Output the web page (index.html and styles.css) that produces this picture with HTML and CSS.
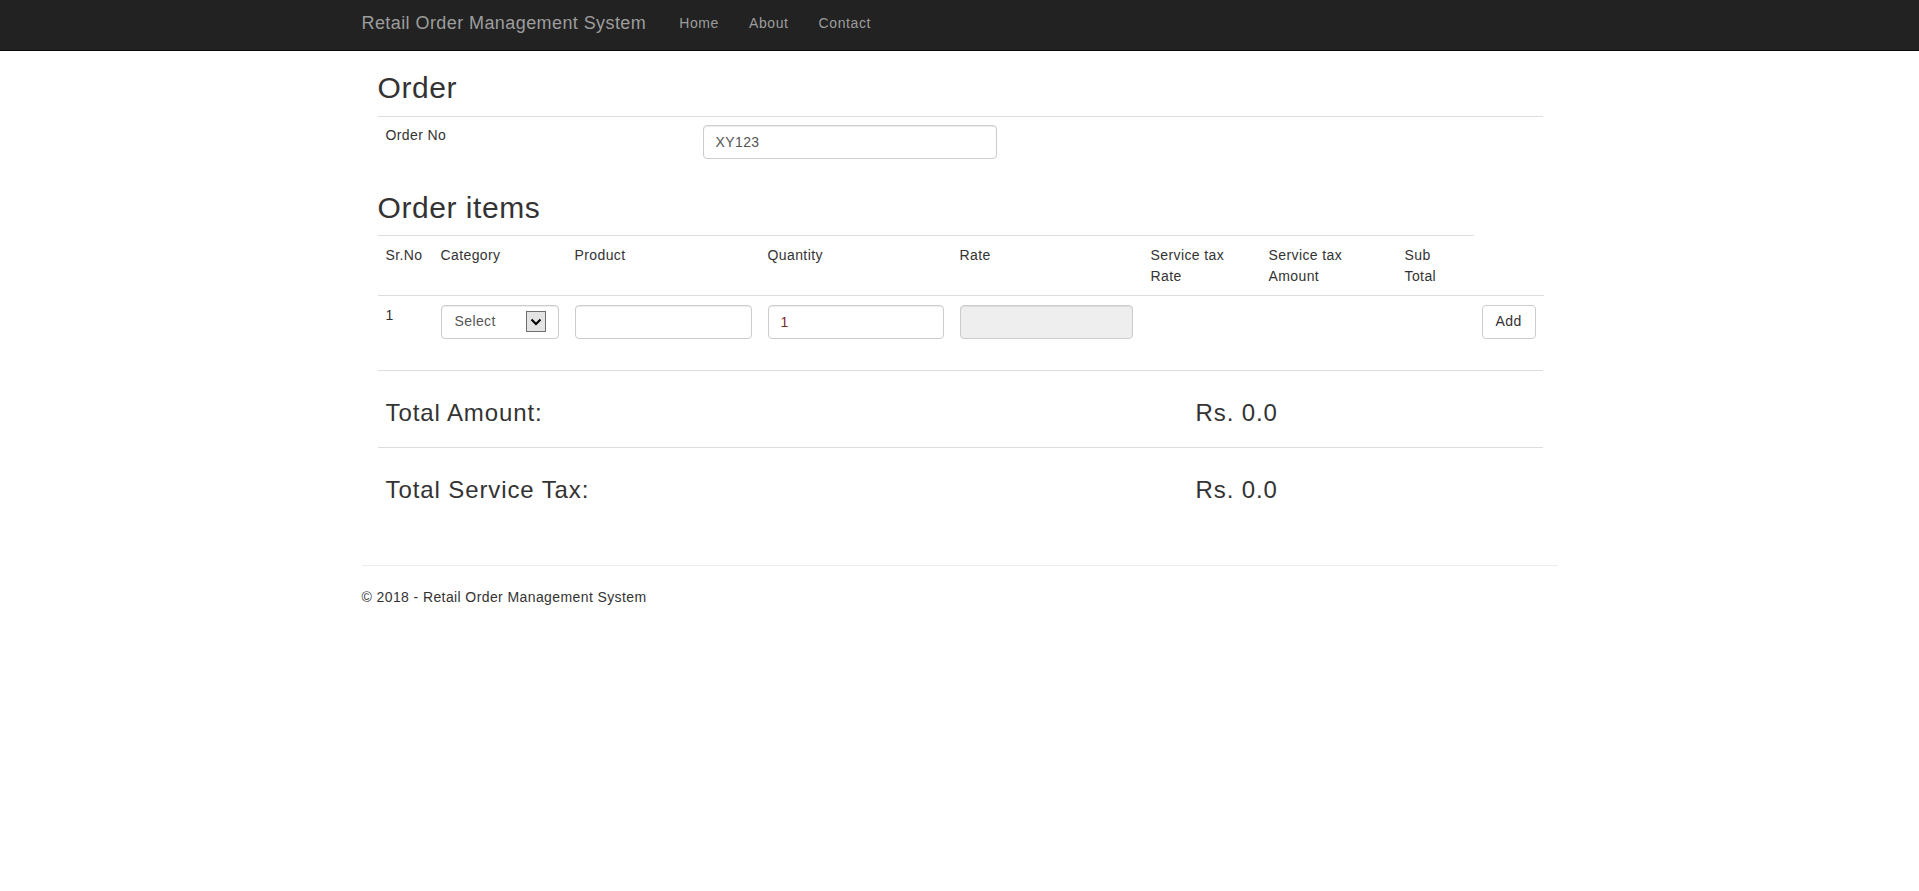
FILE: index.html
```html
<!DOCTYPE html>
<html lang="en">
<head>
<meta charset="utf-8">
<title>Order - Retail Order Management System</title>
<link rel="stylesheet" href="styles.css">
</head>
<body>
<nav class="navbar">
  <div class="container nav-inner">
    <a class="brand" href="#">Retail Order Management System</a>
    <ul class="nav-links">
      <li><a href="#">Home</a></li>
      <li><a href="#">About</a></li>
      <li><a href="#">Contact</a></li>
    </ul>
  </div>
</nav>

<div class="container body-content">
  <div class="order-wrap">
    <h2 class="section-title">Order</h2>
    <table class="table order-table">
      <tr>
        <td class="label-cell">Order No</td>
        <td><input class="form-control order-no-input" type="text" value="XY123"></td>
      </tr>
    </table>

    <h2 class="section-title items-title">Order items</h2>
    <table class="table items-table">
      <colgroup>
        <col class="c-sr"><col class="c-cat"><col class="c-prod"><col class="c-qty"><col class="c-rate"><col class="c-str"><col class="c-sta"><col class="c-sub"><col class="c-add">
      </colgroup>
      <tr class="head-row">
        <td>Sr.No</td>
        <td>Category</td>
        <td>Product</td>
        <td>Quantity</td>
        <td>Rate</td>
        <td>Service tax<br>Rate</td>
        <td>Service tax<br>Amount</td>
        <td>Sub<br>Total</td>
      </tr>
      <tr class="item-row">
        <td class="sr-cell">1</td>
        <td>
          <div class="form-control select-box">
            <span>Select</span>
            <svg class="select-arrow" width="20" height="21" viewBox="0 0 20 21"><rect x="0.5" y="0.5" width="19" height="20" fill="#e3e3e3" stroke="#6f6f6f"/><path d="M5.5 8.5 L10 13 L14.5 8.5" fill="none" stroke="#000" stroke-width="2"/></svg>
          </div>
        </td>
        <td><input class="form-control" type="text" value=""></td>
        <td><input class="form-control qty-input" type="text" value="1"></td>
        <td><input class="form-control rate-input" type="text" value="" readonly disabled></td>
        <td></td>
        <td></td>
        <td></td>
        <td><button class="btn" type="button">Add</button></td>
      </tr>
    </table>

    <table class="table totals-table">
      <tr>
        <td class="total-label">Total Amount:</td>
        <td>Rs. 0.0</td>
      </tr>
      <tr>
        <td class="total-label">Total Service Tax:</td>
        <td>Rs. 0.0</td>
      </tr>
    </table>
  </div>

  <hr class="footer-hr">
  <footer class="footer">
    <p>© 2018 - Retail Order Management System</p>
  </footer>
</div>
</body>
</html>
```

FILE: styles.css
```css
* {
  box-sizing: border-box;
}

html,
body {
  margin: 0;
  padding: 0;
}

body {
  font-family: "Liberation Sans", Arial, Helvetica, sans-serif;
  font-size: 14px;
  line-height: 1.42857;
  color: #333;
  background: #fff;
  letter-spacing: 0.4px;
}

.container {
  width: 1226px;
  margin: 0 auto;
  padding: 0 15px;
}

/* Navbar */
.navbar {
  background: #222;
  border-bottom: 1px solid #080808;
  height: 51px;
}

.nav-inner {
  display: flex;
  align-items: flex-start;
  height: 50px;
}

.brand {
  font-size: 18px;
  line-height: 20px;
  color: #9d9d9d;
  padding: 13px 18px 17px 0;
  text-decoration: none;
  letter-spacing: 0.42px;
}

.nav-links {
  display: flex;
  list-style: none;
  margin: 0;
  padding: 0;
}

.nav-links a {
  display: block;
  padding: 13px 15px 17px;
  line-height: 20px;
  color: #9d9d9d;
  text-decoration: none;
  letter-spacing: 0.6px;
}

/* Content */
.order-wrap {
  padding: 0 15px 0 16px;
}

.section-title {
  font-size: 30px;
  font-weight: 400;
  line-height: 33px;
  margin: 19.5px 0 12.5px;
  letter-spacing: 0.55px;
  color: #333;
}

.section-title.items-title {
  margin-top: 23.5px;
  margin-bottom: 11px;
}

.table {
  width: 100%;
  border-collapse: collapse;
  border-spacing: 0;
}

.table td {
  border-top: 1px solid #ddd;
  padding: 8px;
  vertical-align: top;
  text-align: left;
}

.order-table {
  margin-bottom: 0;
}

.order-table .label-cell {
  width: 317px;
  padding-top: 9px;
}

.form-control {
  display: block;
  width: 100%;
  height: 34px;
  padding: 6px 12px;
  font-family: inherit;
  font-size: 14px;
  line-height: 1.42857;
  letter-spacing: 0.4px;
  color: #555;
  background: #fff;
  border: 1px solid #ccc;
  border-radius: 4px;
  box-shadow: inset 0 1px 1px rgba(0, 0, 0, 0.075);
  margin: 0;
}

.form-control[disabled] {
  background: #eee;
  opacity: 1;
}

.order-no-input {
  width: 294px;
}

/* Items table */
.items-table {
  table-layout: fixed;
}

.c-sr { width: 55px; }
.c-cat { width: 134px; }
.c-prod { width: 193px; }
.c-qty { width: 192px; }
.c-rate { width: 191px; }
.c-str { width: 118px; }
.c-sta { width: 136px; }
.c-sub { width: 77px; }
.c-add { width: 70px; }

.items-table .head-row td {
  padding: 9px 8px 8px;
  line-height: 21px;
}

.items-table .item-row td {
  padding: 9px 8px 31px;
}

.items-table .item-row .sr-cell {
  padding-top: 10px;
}

.select-box {
  display: flex;
  align-items: center;
  justify-content: space-between;
  padding: 0 12px 0 13px;
}

.select-arrow {
  display: block;
  flex: none;
}

.qty-input {
  color: #7a2b2b;
}

.rate-input {
  width: 173px;
}

.btn {
  display: inline-block;
  height: 34px;
  padding: 6px 13px;
  font-family: inherit;
  font-size: 14px;
  line-height: 1.42857;
  letter-spacing: 0.4px;
  color: #333;
  background: #fff;
  border: 1px solid #ccc;
  border-radius: 4px;
  cursor: pointer;
}

/* Totals */
.totals-table {
  margin-bottom: 0;
}

.totals-table td {
  font-size: 24px;
  line-height: 26.4px;
  letter-spacing: 0.9px;
  padding: 29px 8px 21px;
}

.totals-table .total-label {
  width: 810px;
}

/* Footer */
.footer-hr {
  margin: 41px 0 22px;
  border: 0;
  border-top: 1px solid #eee;
  height: 0;
}

.footer p {
  margin: 0 0 10px;
}
```
